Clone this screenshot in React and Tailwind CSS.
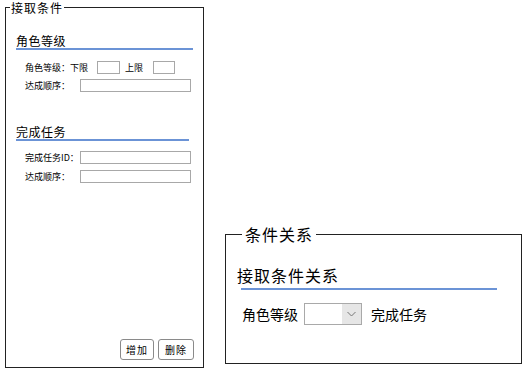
import React from "react";

function Field({ w }) {
  return <div className={`h-[13px] border border-[#a8a8a8] bg-white ${w}`} />;
}

export default function App() {
  return (
    <div className="w-[527px] h-[377px] bg-white text-black flex items-start font-['Noto_Sans_CJK_SC',sans-serif]">
      {/* Left panel */}
      <fieldset className="ml-[5px] mt-[1px] w-[199px] h-[367px] border border-[#222] p-0 m-0 flex flex-col min-w-0">
        <legend className="ml-[4px] px-[1px] text-[12px] leading-[13px] tracking-[1px]">接取条件</legend>
        <div className="flex flex-col flex-1 px-[10px]">
          <div className="mt-[20px] text-[12px] leading-[14px] tracking-[0.5px] border-b-2 border-[#6b93d6]">角色等级</div>
          <div className="mt-[11px] pl-[9px] flex items-center h-[13px] text-[9px] leading-[13px]">
            <span className="w-[72px] whitespace-nowrap">角色等级：下限</span>
            <Field w="w-[23px]" />
            <span className="ml-[5px] w-[28px] whitespace-nowrap">上限</span>
            <Field w="w-[22px]" />
          </div>
          <div className="mt-[5px] pl-[9px] flex items-center h-[13px] text-[9px] leading-[13px]">
            <span className="w-[55px] whitespace-nowrap">达成顺序：</span>
            <Field w="w-[111px]" />
          </div>
          <div className="mt-[33px] mr-[4px] text-[12px] leading-[14px] tracking-[0.5px] border-b-2 border-[#6b93d6]">完成任务</div>
          <div className="mt-[10px] pl-[9px] flex items-center h-[13px] text-[9px] leading-[13px]">
            <span className="w-[55px] whitespace-nowrap">完成任务ID：</span>
            <Field w="w-[111px]" />
          </div>
          <div className="mt-[6px] pl-[9px] flex items-center h-[13px] text-[9px] leading-[13px]">
            <span className="w-[55px] whitespace-nowrap">达成顺序：</span>
            <Field w="w-[111px]" />
          </div>
          <div className="mt-auto mb-[7px] flex justify-end gap-[4px] mr-[-1px]">
            <button className="w-[34px] h-[21px] border border-[#8a8a8a] rounded-[3px] bg-white text-[10px] leading-[19px] tracking-[1px]">增加</button>
            <button className="w-[36px] h-[21px] border border-[#8a8a8a] rounded-[3px] bg-white text-[10px] leading-[19px] tracking-[1px]">删除</button>
          </div>
        </div>
      </fieldset>

      {/* Right panel */}
      <fieldset className="ml-[21px] mt-[225px] w-[297px] h-[139px] border border-[#222] p-0 m-0 min-w-0">
        <legend className="ml-[16px] px-[3px] text-[16px] leading-[18px] tracking-[1px]">条件关系</legend>
        <div className="flex flex-col pl-[11px]">
          <div className="mt-[22px] text-[16px] leading-[20px] tracking-[1px]">接取条件关系</div>
          <div className="mt-[3px] ml-[4px] w-[256px] h-[2px] bg-[#6b93d6]" />
          <div className="mt-[13px] ml-[5px] flex items-center h-[22px] text-[14px] leading-[22px]">
            <span className="w-[62px] whitespace-nowrap">角色等级</span>
            <div className="w-[58px] h-[22px] border border-[#a9a9a9] flex bg-white">
              <div className="flex-1" />
              <div className="w-[19px] h-full bg-[#e6e6e6] flex items-center justify-center">
                <svg width="9" height="6" viewBox="0 0 9 6">
                  <path d="M0.5 1 L4.5 5 L8.5 1" fill="none" stroke="#777" strokeWidth="1" />
                </svg>
              </div>
            </div>
            <span className="ml-[9px] whitespace-nowrap">完成任务</span>
          </div>
        </div>
      </fieldset>
    </div>
  );
}
